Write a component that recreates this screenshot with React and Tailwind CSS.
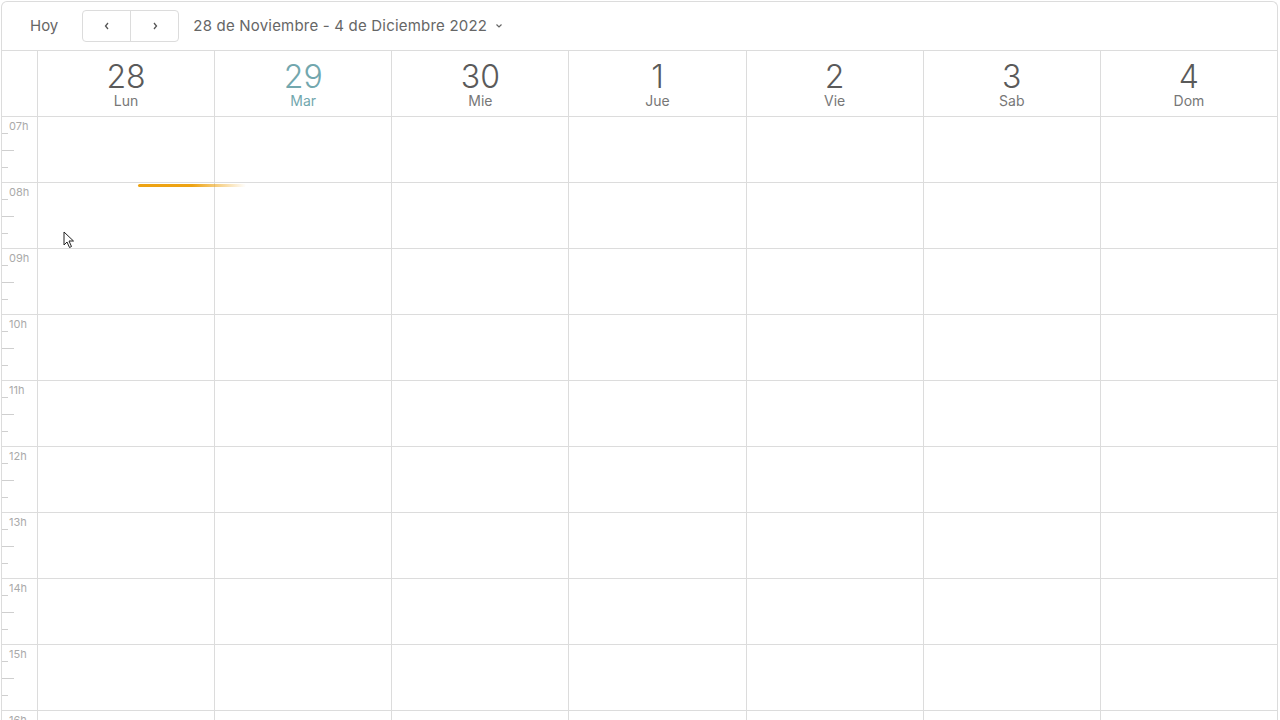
import React from "react";

const days = [
  { num: "28", name: "Lun" },
  { num: "29", name: "Mar", today: true },
  { num: "30", name: "Mie" },
  { num: "1", name: "Jue" },
  { num: "2", name: "Vie" },
  { num: "3", name: "Sab" },
  { num: "4", name: "Dom" },
];

const hours = ["07h", "08h", "09h", "10h", "11h", "12h", "13h", "14h", "15h", "16h"];

export default function App() {
  return (
    <div
      className="h-screen overflow-hidden bg-white pt-px pl-px pr-[2px]"
      style={{ fontFamily: "Inter, 'Open Sans', sans-serif" }}
    >
      <div className="h-full border border-b-0 border-[#dcdcdc] rounded-t-md flex flex-col">
        {/* toolbar */}
        <div className="h-[49px] shrink-0 flex items-center border-b border-[#dcdcdc]">
          <button className="ml-[28px] text-[15px] text-[#666]">Hoy</button>
          <div className="ml-[24px] flex h-[32px] border border-[#dcdcdc] rounded">
            <button className="w-[48px] flex items-center justify-center text-[#555] border-r border-[#dcdcdc]">
              <svg width="8" height="10" viewBox="0 0 8 10" fill="none" stroke="currentColor" strokeWidth="1.3">
                <path d="M5 2 L2.5 5 L5 8" />
              </svg>
            </button>
            <button className="w-[47px] flex items-center justify-center text-[#555]">
              <svg width="8" height="10" viewBox="0 0 8 10" fill="none" stroke="currentColor" strokeWidth="1.3">
                <path d="M3 2 L5.5 5 L3 8" />
              </svg>
            </button>
          </div>
          <button className="ml-[14px] flex items-center gap-[8px] text-[15px] tracking-[0.2px] text-[#666]">
            28 de Noviembre - 4 de Diciembre 2022
            <svg width="8" height="6" viewBox="0 0 8 6" fill="none" stroke="#666" strokeWidth="1.2">
              <path d="M1.5 1.5 L4 4 L6.5 1.5" />
            </svg>
          </button>
        </div>

        {/* day header */}
        <div className="h-[66px] shrink-0 flex border-b border-[#dcdcdc]">
          <div className="w-[36px] shrink-0 border-r border-[#dcdcdc]" />
          {days.map((d, i) => (
            <div
              key={d.num}
              className={`flex-1 flex flex-col items-center pt-[10px] ${i < 6 ? "border-r border-[#dcdcdc]" : ""} ${
                d.today ? "text-[#72a7ae]" : "text-[#5a5a5a]"
              }`}
            >
              <div className="text-[32px] font-light leading-[31px]">{d.num}</div>
              <div
                className={`text-[14px] leading-[17px] ${d.today ? "text-[#72a7ae]" : "text-[#777]"}`}
              >
                {d.name}
              </div>
            </div>
          ))}
        </div>

        {/* hour grid */}
        <div className="relative flex-1">
          {hours.map((h) => (
            <div key={h} className="h-[66px] flex border-b border-[#dcdcdc]">
              <div className="relative w-[36px] shrink-0 border-r border-[#dcdcdc]">
                <span className="absolute left-[7px] top-[2px] text-[11px] leading-[14px] text-[#aaa]">{h}</span>
                <span className="absolute left-0 top-[16px] w-[6px] h-px bg-[#cfcfcf]" />
                <span className="absolute left-0 top-[33px] w-[12px] h-px bg-[#cfcfcf]" />
                <span className="absolute left-0 top-[50px] w-[6px] h-px bg-[#cfcfcf]" />
              </div>
              {days.map((d, i) => (
                <div key={d.num} className={`flex-1 ${i < 6 ? "border-r border-[#dcdcdc]" : ""}`} />
              ))}
            </div>
          ))}

          {/* drag indicator */}
          <div className="absolute left-[136px] top-[67px] w-[108px] h-[3px] rounded-full bg-gradient-to-r from-[#eea312] via-[#eea312] to-transparent" />

          {/* mouse cursor */}
          <svg className="absolute left-[61px] top-[114px]" width="12" height="18" viewBox="0 0 12 18">
            <path d="M1 1 L1 14 L4 11 L6.5 16.5 L8.5 15.5 L6 10 L10.5 10 Z" fill="#fff" stroke="#222" strokeWidth="1" />
          </svg>
        </div>
      </div>
    </div>
  );
}
